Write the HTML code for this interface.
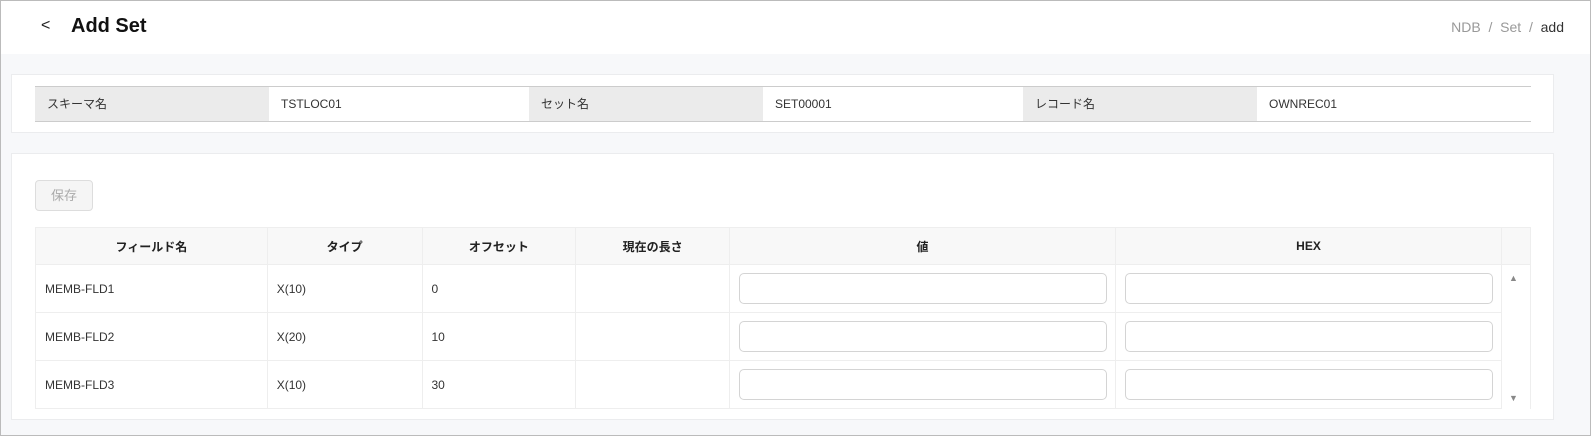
<!DOCTYPE html>
<html><head><meta charset="utf-8"><style>
*{box-sizing:border-box;margin:0;padding:0}
body{width:1591px;height:436px;overflow:hidden;font-family:"Liberation Sans","Noto Sans CJK JP",sans-serif;font-size:12px;color:#333;background:#f7f8fa;position:relative}
.frame{position:absolute;left:0;top:0;width:1591px;height:436px;border:1px solid #bbb;pointer-events:none}
.hdr{position:absolute;left:1px;top:1px;width:1589px;height:53px;background:#fff}
.back{position:absolute;left:40px;top:16px;font-size:16px;color:#222}
.title{position:absolute;left:70px;top:14px;font-size:20px;font-weight:bold;color:#111}
.bc{position:absolute;right:26px;top:18px;font-size:14px;color:#999}
.bc b{font-weight:normal;color:#333}
.card{position:absolute;left:11px;width:1543px;background:#fff;border:1px solid #ebecee}
.info{position:absolute;left:35px;top:86px;width:1496px;height:36px;border-top:1px solid #ccc;border-bottom:1px solid #ccc;display:flex}
.info div{height:100%;line-height:34px;padding-left:12px}
.l{background:#ebebeb;width:234px}
.v{width:260px;background:#fff}
.btn{position:absolute;left:35px;top:180px;width:58px;height:31px;border:1px solid #ddd;border-radius:4px;background:#f5f5f5;color:#aaa;text-align:center;line-height:29px;font-size:13px}
table{position:absolute;left:35px;top:227px;border-collapse:collapse;width:1496px}
td,th{border:1px solid #eee;height:48px;padding-left:9px;text-align:left;font-weight:normal}
th{height:37px;background:#f8f8f8;font-weight:bold;text-align:center;padding:0;color:#222}
.in{width:368px;height:31px;border:1px solid #d4d4d4;border-radius:5px;background:#fff}
.scr{border:none;background:#fff}
</style></head><body>
<div class="hdr"><span class="back">&lt;</span><span class="title">Add Set</span><span class="bc">NDB &nbsp;/&nbsp; Set &nbsp;/&nbsp; <b>add</b></span></div>
<div class="card" style="top:74px;height:59px"></div>
<div class="info"><div class="l">スキーマ名</div><div class="v">TSTLOC01</div><div class="l">セット名</div><div class="v">SET00001</div><div class="l">レコード名</div><div class="v" style="width:274px">OWNREC01</div></div>
<div class="card" style="top:153px;height:267px"></div>
<div class="btn">保存</div>
<table>
<tr><th style="width:232px">フィールド名</th><th style="width:155px">タイプ</th><th style="width:154px">オフセット</th><th style="width:154px">現在の長さ</th><th style="width:386px">値</th><th style="width:386px">HEX</th><th style="width:29px"></th></tr>
<tr><td>MEMB-FLD1</td><td>X(10)</td><td>0</td><td></td><td><div class="in"></div></td><td><div class="in"></div></td><td rowspan="3" style="padding:0;position:relative;border-bottom:none"><span style="position:absolute;left:7px;top:8px;font-size:9px;color:#888">▲</span><span style="position:absolute;left:7px;bottom:6px;font-size:9px;color:#888">▼</span></td></tr>
<tr><td>MEMB-FLD2</td><td>X(20)</td><td>10</td><td></td><td><div class="in"></div></td><td><div class="in"></div></td></tr>
<tr><td>MEMB-FLD3</td><td>X(10)</td><td>30</td><td></td><td><div class="in"></div></td><td><div class="in"></div></td></tr>
</table>
<div class="frame"></div>
</body></html>
